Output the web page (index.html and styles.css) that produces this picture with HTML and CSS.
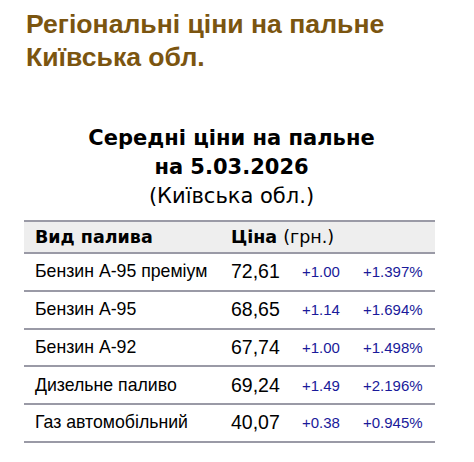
FILE: index.html
```html
<!DOCTYPE html>
<html lang="uk">
<head>
<meta charset="utf-8">
<link rel="stylesheet" href="styles.css">
</head>
<body>
<div class="page">
  <h1 class="title">Регіональні ціни на пальне<br>Київська обл.</h1>
  <h2 class="subtitle">Середні ціни на пальне<br>на 5.03.2026<br><span class="region">(Київська обл.)</span></h2>
  <table class="prices">
    <thead>
      <tr><th class="c-name">Вид палива</th><th class="c-price" colspan="3">Ціна <span class="unit">(грн.)</span></th></tr>
    </thead>
    <tbody>
      <tr><td class="c-name">Бензин А-95 преміум</td><td class="c-price">72,61</td><td class="c-chg">+1.00</td><td class="c-pct">+1.397%</td></tr>
      <tr><td class="c-name">Бензин А-95</td><td class="c-price">68,65</td><td class="c-chg">+1.14</td><td class="c-pct">+1.694%</td></tr>
      <tr><td class="c-name">Бензин А-92</td><td class="c-price">67,74</td><td class="c-chg">+1.00</td><td class="c-pct">+1.498%</td></tr>
      <tr><td class="c-name">Дизельне паливо</td><td class="c-price">69,24</td><td class="c-chg">+1.49</td><td class="c-pct">+2.196%</td></tr>
      <tr><td class="c-name">Газ автомобільний</td><td class="c-price">40,07</td><td class="c-chg">+0.38</td><td class="c-pct">+0.945%</td></tr>
    </tbody>
  </table>
</div>
</body>
</html>
```
FILE: styles.css
```css
html, body { margin: 0; padding: 0; background: #fff; }
.page { padding: 8px 24px 0 26px; width: 411px; }
.title {
  margin: 0;
  font-family: "Liberation Sans", Arial, sans-serif;
  font-weight: bold;
  font-size: 26.6px;
  line-height: 33px;
  color: #7b5510;
}
.subtitle {
  margin: 50px 0 0 0;
  text-align: center;
  font-family: "DejaVu Sans", Verdana, sans-serif;
  font-weight: bold;
  font-size: 21px;
  line-height: 29px;
  color: #000;
}
.region { font-weight: normal; font-size: 21px; }
.prices {
  margin: 9px 0 0 -2px;
  width: 411px;
  border-collapse: collapse;
  border-top: 2px solid #9a9aa6;
}
.prices th {
  background: #eee;
  text-align: left;
  font-family: "DejaVu Sans", Verdana, sans-serif;
  font-size: 17.5px;
  font-weight: bold;
  height: 30px;
  padding: 0;
  border-bottom: 2px solid #9a9aa6;
}
.prices th .unit { font-weight: normal; }
.prices td {
  font-family: "Liberation Sans", Arial, sans-serif;
  height: 35.75px;
  padding: 0;
  border-bottom: 2px solid #9a9aa6;
}
.c-name { padding-left: 11px !important; width: 196px; font-size: 17.7px; }
.c-price { width: 71px; font-size: 19.5px; }
.c-chg { width: 61px; font-size: 15px; color: #1a1a9a; }
.c-pct { font-size: 15px; color: #1a1a9a; }
```
